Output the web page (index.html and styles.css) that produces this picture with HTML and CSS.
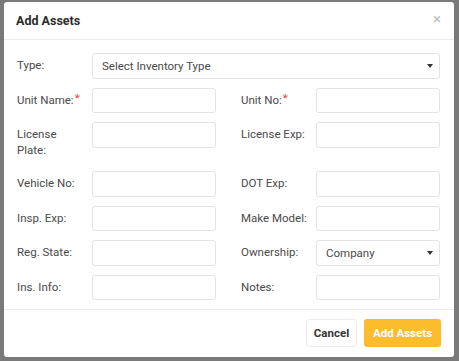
FILE: index.html
```html
<!DOCTYPE html>
<html lang="en">
<head>
  <meta charset="UTF-8">
  <meta name="viewport" content="width=device-width, initial-scale=1.0">
  <title>Add Assets</title>
  <link rel="stylesheet" href="styles.css">
</head>
<body>
  <div class="modal">
    <div class="modal-header">
      <h1>Add Assets</h1>
      <span class="close">&times;</span>
    </div>

    <div class="modal-body">
      <div class="row">
        <label>Type:</label>
        <div class="select wide">
          <span>Select Inventory Type</span>
          <svg width="6" height="4" viewBox="0 0 6 4"><path d="M0 0h6L3 4z" fill="#333"/></svg>
        </div>
      </div>

      <div class="row">
        <label>Unit Name:<span class="req">*</span></label>
        <input type="text">
        <span></span>
        <label>Unit No:<span class="req">*</span></label>
        <input type="text">
      </div>

      <div class="row">
        <label>License<br>Plate:</label>
        <input type="text">
        <span></span>
        <label>License Exp:</label>
        <input type="text">
      </div>

      <div class="row">
        <label>Vehicle No:</label>
        <input type="text">
        <span></span>
        <label>DOT Exp:</label>
        <input type="text">
      </div>

      <div class="row">
        <label>Insp. Exp:</label>
        <input type="text">
        <span></span>
        <label>Make Model:</label>
        <input type="text">
      </div>

      <div class="row">
        <label>Reg. State:</label>
        <input type="text">
        <span></span>
        <label>Ownership:</label>
        <div class="select">
          <span>Company</span>
          <svg width="6" height="4" viewBox="0 0 6 4"><path d="M0 0h6L3 4z" fill="#333"/></svg>
        </div>
      </div>

      <div class="row">
        <label>Ins. Info:</label>
        <input type="text">
        <span></span>
        <label>Notes:</label>
        <input type="text">
      </div>
    </div>

    <div class="modal-footer">
      <button class="btn-cancel">Cancel</button>
      <button class="btn-add">Add Assets</button>
    </div>
  </div>
</body>
</html>
```

FILE: styles.css
```css
* {
  box-sizing: border-box;
  margin: 0;
  padding: 0;
  font-family: Roboto, 'Liberation Sans', sans-serif;
}

body {
  background-color: #7a7a7a;
  padding: 2px 0 0 4px;
}

.modal {
  background-color: white;
  width: 450px;
  height: 355px;
  border-radius: 3px;
}

.modal-header {
  display: flex;
  justify-content: space-between;
  align-items: center;
  height: 38px;
  padding: 0 13px 0 12px;
  border-bottom: 1px solid #ececec;
}

.modal-header h1 {
  font-size: 12.5px;
  font-weight: 700;
  color: #2b2b2b;
}

.close {
  font-size: 15px;
  color: #bdbdbd;
  line-height: 1;
  margin-top: -2px;
}

.modal-body {
  padding: 13px 14px 0 13px;
}

.row {
  display: grid;
  grid-template-columns: 75px 124px 25px 75px 124px;
  align-items: start;
  margin-bottom: 9px;
}

label {
  font-size: 11.5px;
  line-height: 16px;
  color: #4a4a4a;
  padding: 4px 0;
}

.req {
  color: #e53935;
  margin-left: 1px;
  position: relative;
  top: -2px;
}

input {
  height: 25.5px;
  border: 1px solid #e3e3e3;
  border-radius: 3px;
  outline: none;
  font-size: 12px;
}

.select {
  display: flex;
  justify-content: space-between;
  align-items: center;
  height: 25.5px;
  padding: 0 6px 0 9px;
  border: 1px solid #e3e3e3;
  border-radius: 3px;
  font-size: 11.5px;
  color: #4a4a4a;
}

.select.wide {
  grid-column: 2 / 6;
}

.modal-footer {
  display: flex;
  justify-content: flex-end;
  gap: 7px;
  padding: 9px 13px 0 0;
  border-top: 1px solid #ececec;
}

button {
  height: 28px;
  border-radius: 3px;
  font-size: 11.5px;
  font-weight: 700;
  cursor: pointer;
}

.btn-cancel {
  width: 51px;
  background-color: white;
  color: #333;
  border: 1px solid #ececec;
}

.btn-add {
  width: 77px;
  background-color: #fbbd2c;
  color: white;
  border: none;
}
```
